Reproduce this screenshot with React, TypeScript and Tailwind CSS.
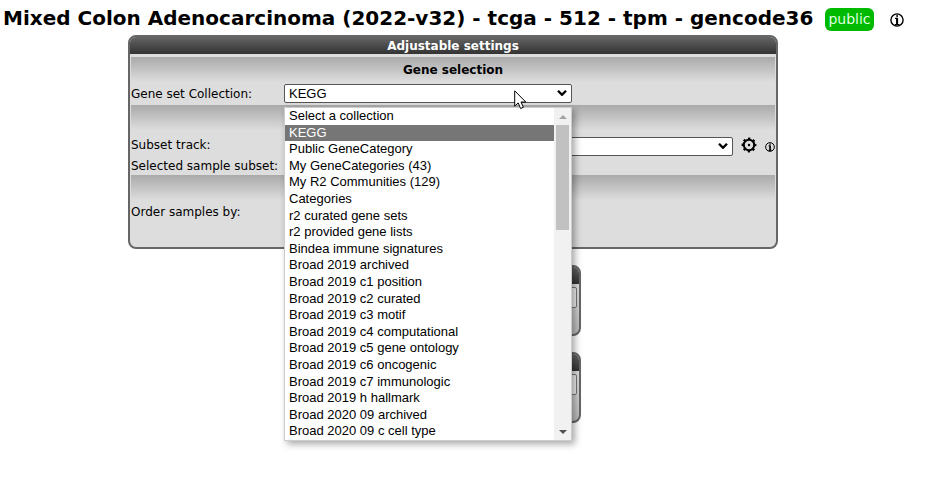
import type { ReactNode } from "react";

const collections = [
  "Select a collection",
  "KEGG",
  "Public GeneCategory",
  "My GeneCategories (43)",
  "My R2 Communities (129)",
  "Categories",
  "r2 curated gene sets",
  "r2 provided gene lists",
  "Bindea immune signatures",
  "Broad 2019 archived",
  "Broad 2019 c1 position",
  "Broad 2019 c2 curated",
  "Broad 2019 c3 motif",
  "Broad 2019 c4 computational",
  "Broad 2019 c5 gene ontology",
  "Broad 2019 c6 oncogenic",
  "Broad 2019 c7 immunologic",
  "Broad 2019 h hallmark",
  "Broad 2020 09 archived",
  "Broad 2020 09 c cell type",
];

function InfoIcon({ className }: { className: string }) {
  return (
    <svg viewBox="0 0 14 14" className={className} fill="none" stroke="currentColor" aria-hidden="true">
      <circle cx="7" cy="7" r="6.1" strokeWidth="1.4" />
      <path d="M7.1 1.8v2.4M7.1 5v7M5 5.4h2.1M4.8 11.6h4.6" strokeWidth="1.4" />
      <path d="M7.1 5v7" strokeWidth="2" />
    </svg>
  );
}

function GearIcon() {
  return (
    <svg viewBox="0 0 16 16" className="size-4" fill="none" stroke="currentColor" aria-hidden="true">
      <circle cx="8" cy="8" r="5.2" strokeWidth="2" />
      <circle cx="8" cy="8" r="6.6" strokeWidth="1.6" strokeDasharray="2.4 2.784" strokeDashoffset="1.2" />
      <circle cx="8" cy="8" r="1.2" fill="currentColor" stroke="none" />
    </svg>
  );
}

function Dropdown({ id, className, children }: { id: string; className: string; children?: ReactNode }) {
  return (
    <div className={`relative ${className}`}>
      <select
        id={id}
        className="block h-[19px] w-full appearance-none rounded-xs border border-[#555] bg-white pl-1 font-['Liberation_Sans',Arial,sans-serif] text-[13px] leading-4 text-black"
      >
        {children}
      </select>
      <svg
        viewBox="0 0 10 6"
        className="pointer-events-none absolute top-1.5 right-[5px] h-1.5 w-2.5"
        fill="none"
        stroke="black"
        strokeWidth="2.3"
        aria-hidden="true"
      >
        <path d="M1 .8l4 4 4-4" />
      </svg>
    </div>
  );
}

function Section({ className, children }: { className: string; children: ReactNode }) {
  return (
    <section className={`mx-px bg-linear-to-b from-[#aaa] from-0% to-[#ddd] to-[25px] ${className}`}>
      {children}
    </section>
  );
}

function Panel({ title, className, children }: { title?: string; className: string; children: ReactNode }) {
  return (
    <div className={`mx-auto rounded-lg border-2 border-[#666] ${className}`}>
      <h2 className="h-[17px] rounded-t-md bg-linear-to-b from-[#666] to-[#333] text-center text-[12px] leading-[18px] font-bold text-white">
        {title}
      </h2>
      {children}
    </div>
  );
}

function CollectionList() {
  return (
    <div className="absolute top-full left-0 z-10 mt-1 flex w-full border border-[#ccc] bg-white shadow-[3px_3px_7px_rgba(0,0,0,0.35)]">
      <ul
        role="listbox"
        aria-label="Gene set Collection"
        className="grid h-[332px] flex-1 auto-rows-fr font-['Liberation_Sans',Arial,sans-serif] text-[13px] leading-4"
      >
        {collections.map((name) => (
          <li
            key={name}
            role="option"
            aria-selected={name === "KEGG"}
            className="pl-1 whitespace-nowrap aria-selected:bg-[#767676] aria-selected:text-white"
          >
            {name}
          </li>
        ))}
      </ul>
      <div className="flex w-[17px] flex-col items-center bg-[#f1f1f1]" aria-hidden="true">
        <div className="flex h-[17px] items-center">
          <svg viewBox="0 0 8 4" className="h-1 w-2" fill="#a3a3a3">
            <path d="M0 4l4-4 4 4z" />
          </svg>
        </div>
        <div className="h-[105px] w-[13px] bg-[#c1c1c1]" />
        <div className="mt-auto flex h-[17px] items-center">
          <svg viewBox="0 0 8 4" className="h-1 w-2" fill="#505050">
            <path d="M0 0l4 4 4-4z" />
          </svg>
        </div>
      </div>
    </div>
  );
}

function Pointer() {
  return (
    <svg viewBox="0 0 13 20" className="pointer-events-none absolute top-1.5 left-[230px] z-20 h-5 w-[13px]" aria-hidden="true">
      <path d="M.7.8v15.4l3.5-3.3 2.4 5.6 2.8-1.2L7 12h4.8z" fill="white" stroke="black" strokeWidth="1" />
    </svg>
  );
}

export default function App() {
  return (
    <main className="min-h-screen pr-10 font-['DejaVu_Sans',Verdana,sans-serif] text-[12px] leading-4 text-black">
      <header className="flex h-[35px] items-center pl-[3px]">
        <h1 className="text-[20px] leading-6 font-bold whitespace-nowrap">
          Mixed Colon Adenocarcinoma (2022-v32) - tcga - 512 - tpm - gencode36
        </h1>
        <span className="mt-1 ml-3 h-[23px] rounded-md bg-[#00ba00] px-[3px] text-[14px] leading-[23px] text-[#dfffdf]">
          public
        </span>
        <button type="button" aria-label="Dataset information" className="ml-4 pt-1">
          <InfoIcon className="size-3.5" />
        </button>
      </header>

      <Panel title="Adjustable settings" className="w-[650px] bg-[#ddd]">
        <Section className="mt-[3px] h-12">
          <h3 className="pt-1 text-center text-[12px] leading-[18px] font-bold">Gene selection</h3>
          <div className="mt-[5px] grid h-[19px] grid-cols-[153px_1fr] items-start">
            <label htmlFor="collection" className="leading-5">Gene set Collection:</label>
            <div className="relative w-72">
              <Dropdown id="collection" className="w-full">
                <option>KEGG</option>
              </Dropdown>
              <Pointer />
              <CollectionList />
            </div>
          </div>
        </Section>
        <Section className="h-[70px] pt-8">
          <div className="grid h-[19px] grid-cols-[153px_1fr] items-start">
            <label htmlFor="subset" className="leading-4">Subset track:</label>
            <div className="flex h-[19px] items-center">
              <Dropdown id="subset" className="w-[449px]" />
              <button type="button" aria-label="Subset settings" className="ml-2 pb-1">
                <GearIcon />
              </button>
              <button type="button" aria-label="Subset information" className="ml-2">
                <InfoIcon className="size-2.5" />
              </button>
            </div>
          </div>
          <p className="mt-0.5 leading-4">Selected sample subset:</p>
        </Section>
        <Section className="h-[72px] rounded-b-md pt-7">
          <p className="leading-[18px]">Order samples by:</p>
        </Section>
      </Panel>

      <Panel className="mt-4 h-[71px] w-64 bg-linear-to-b from-[#eee] to-[#bbb]">
        <div className="px-0.5 pt-[3px]">
          <button type="button" aria-label="Next" className="block h-[21px] w-full rounded-xs border border-[#767676] bg-[#efefef]" />
        </div>
      </Panel>
      <Panel className="mt-4 h-[71px] w-64 bg-linear-to-b from-[#eee] to-[#bbb]">
        <div className="px-0.5 pt-[3px]">
          <button type="button" aria-label="Reset" className="block h-[21px] w-full rounded-xs border border-[#767676] bg-[#efefef]" />
        </div>
      </Panel>
    </main>
  );
}
